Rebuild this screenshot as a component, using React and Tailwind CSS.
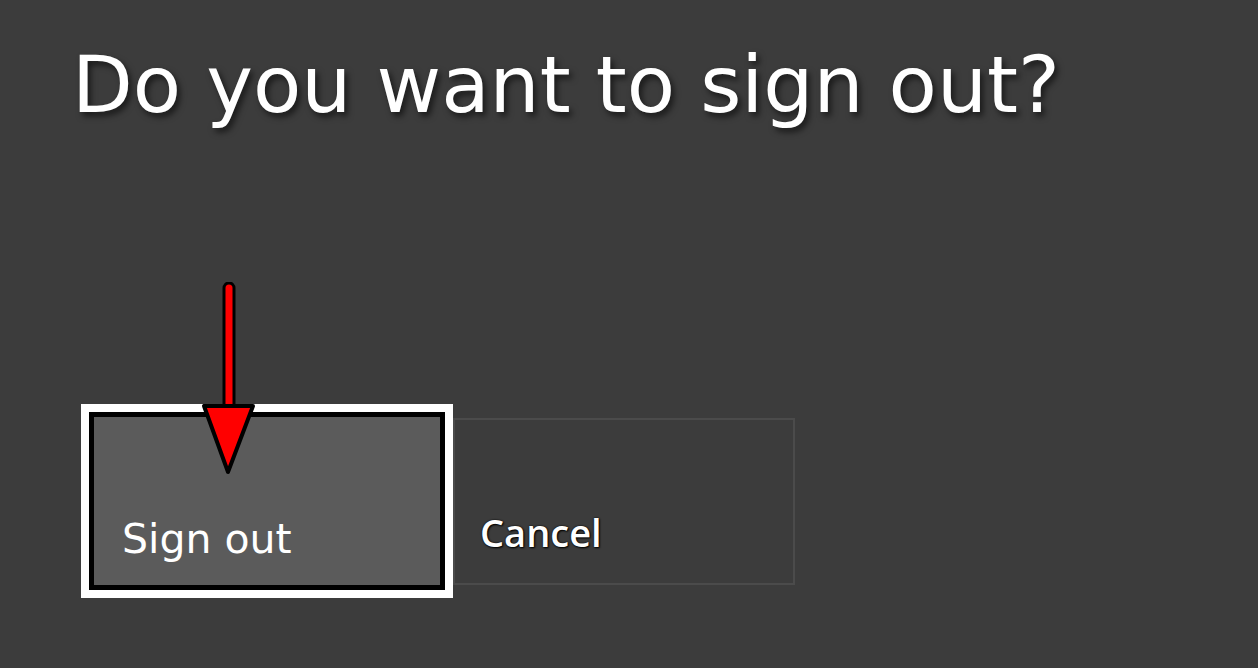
import React from "react";

function RedArrow() {
  return (
    <svg
      className="absolute left-[200px] top-[282px]"
      width="58"
      height="196"
      viewBox="0 0 58 196"
    >
      <path
        d="M29 6 L29 124"
        stroke="#000"
        strokeWidth="13"
        strokeLinecap="round"
        fill="none"
      />
      <path
        d="M29 6 L29 124"
        stroke="#ff0000"
        strokeWidth="7"
        strokeLinecap="round"
        fill="none"
      />
      <path
        d="M4 124 L53 124 L28 190 Z"
        fill="#ff0000"
        stroke="#000"
        strokeWidth="4"
        strokeLinejoin="round"
      />
    </svg>
  );
}

export default function App() {
  return (
    <div className="relative w-[1258px] h-[668px] overflow-hidden bg-[#3c3c3c] font-['DejaVu_Sans',sans-serif]">
      <h1 className="pl-[72px] pt-[40px] text-[79px] leading-[90px] font-normal text-white [text-shadow:3px_4px_6px_rgba(0,0,0,0.6)]">
        Do you want to sign out?
      </h1>

      <div className="flex items-center pl-[81px] mt-[274px]">
        <div className="w-[372px] h-[194px] border-[8px] border-white bg-white">
          <div className="w-full h-full border-[5px] border-black bg-[#5b5b5b] flex items-end pl-[28px] pb-[25px]">
            <span className="text-[41px] leading-none text-white">Sign out</span>
          </div>
        </div>
        <div className="w-[342px] h-[167px] border-2 border-[#4b4b4b] flex items-end pl-[25px] pb-[32px]">
          <span className="font-['Open_Sans',sans-serif] font-semibold text-[38px] leading-none text-white [text-shadow:0_0_2px_#000,1px_1px_2px_#000]">
            Cancel
          </span>
        </div>
      </div>

      <RedArrow />
    </div>
  );
}
